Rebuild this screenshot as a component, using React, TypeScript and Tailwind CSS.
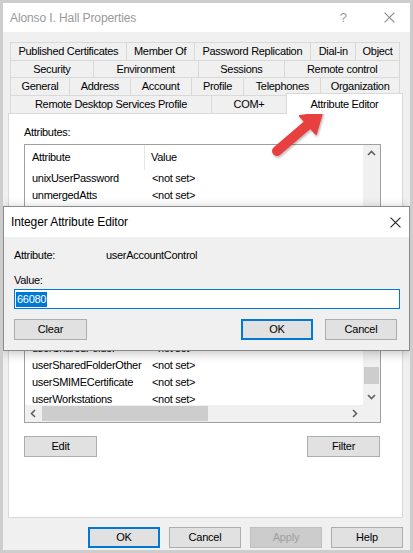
import React from 'react'

const tabRows: { label: string; w: number }[][] = [
  [
    { label: 'Published Certificates', w: 116 },
    { label: 'Member Of', w: 68 },
    { label: 'Password Replication', w: 117 },
    { label: 'Dial-in', w: 45 },
    { label: 'Object', w: 44 },
  ],
  [
    { label: 'Security', w: 83 },
    { label: 'Environment', w: 105 },
    { label: 'Sessions', w: 87 },
    { label: 'Remote control', w: 115 },
  ],
  [
    { label: 'General', w: 59 },
    { label: 'Address', w: 61 },
    { label: 'Account', w: 61 },
    { label: 'Profile', w: 53 },
    { label: 'Telephones', w: 77 },
    { label: 'Organization', w: 79 },
  ],
]

// rows 2..9 sit behind the dialog, so they get no text drawn
const attrs: [string, string, boolean][] = [
  ['unixUserPassword', '<not set>', true],
  ['unmergedAtts', '<not set>', true],
  ['unstructuredAddress', '<not set>', false],
  ['unstructuredName', '<not set>', false],
  ['url', '<not set>', false],
  ['userAccountControl', '0x10200', false],
  ['userCert', '<not set>', false],
  ['userCertificate', '<not set>', false],
  ['userParameters', '<not set>', false],
  ['userPassword', '<not set>', false],
  ['userSharedFolder', '<not set>', true],
  ['userSharedFolderOther', '<not set>', true],
  ['userSMIMECertificate', '<not set>', true],
  ['userWorkstations', '<not set>', true],
]

function Chevron({ dir }: { dir: 'up' | 'down' | 'left' | 'right' }) {
  const pts = {
    up: '1,6 4.5,2.5 8,6',
    down: '1,3 4.5,6.5 8,3',
    left: '6,1 2.5,4.5 6,8',
    right: '3,1 6.5,4.5 3,8',
  }[dir]
  return (
    <svg width="9" height="9" viewBox="0 0 9 9">
      <polyline points={pts} fill="none" stroke="#606060" strokeWidth="1.6" />
    </svg>
  )
}

function CloseX({ color, size }: { color: string; size: number }) {
  return (
    <svg width={size} height={size} viewBox="0 0 10 10">
      <path d="M0.5 0.5 L9.5 9.5 M9.5 0.5 L0.5 9.5" stroke={color} strokeWidth="1" />
    </svg>
  )
}

function Button({
  children,
  w,
  primary,
  disabled,
}: {
  children: React.ReactNode
  w: number
  primary?: boolean
  disabled?: boolean
}) {
  return (
    <div
      style={{ width: w }}
      className={
        'h-[21px] flex items-center justify-center text-[11px] tracking-[-0.2px] ' +
        (primary
          ? 'bg-[#e1e1e1] border-2 border-[#0078d7] text-black'
          : disabled
            ? 'bg-[#cccccc] border border-[#bfbfbf] text-[#a0a0a0]'
            : 'bg-[#e1e1e1] border border-[#adadad] text-black')
      }
    >
      {children}
    </div>
  )
}

export default function App() {
  return (
    <div className="relative w-[413px] h-[553px] overflow-hidden bg-[#f0f0f0] border-[3px] border-[#cdcdcd] font-['Liberation_Sans',Arial,sans-serif] text-black select-none">
      {/* Title bar */}
      <div className="h-[29px] bg-white flex items-center pl-[7px] pr-[15px]">
        <span className="text-[12px] text-[#999999] tracking-[-0.1px]">Alonso I. Hall Properties</span>
        <span className="ml-auto mr-[37px] text-[13px] text-[#9a9a9a]">?</span>
        <CloseX color="#8a8a8a" size={11} />
      </div>

      {/* Tabs */}
      <div className="mt-[10px] ml-[7px] flex flex-col text-[11px] tracking-[-0.3px]">
        {tabRows.map((row, i) => (
          <div key={i} className={'flex w-[390px] border-r border-[#d9d9d9] ' + (i === 1 ? 'h-[17px]' : 'h-[18px]')}>
            {row.map(t => (
              <div
                key={t.label}
                style={{ width: t.w }}
                className="border-l border-t border-[#d9d9d9] flex items-center justify-center whitespace-nowrap"
              >
                {t.label}
              </div>
            ))}
          </div>
        ))}
        <div className="flex h-[18px]">
          <div className="w-[201px] border-l border-t border-[#d9d9d9] flex items-center justify-center whitespace-nowrap">
            Remote Desktop Services Profile
          </div>
          <div className="w-[75px] border-l border-t border-[#d9d9d9] flex items-center justify-center">COM+</div>
          <div className="relative z-10 w-[117px] h-[21px] -mt-[2px] bg-white border-l border-t border-r border-[#d9d9d9] flex items-start pt-[2px] justify-center whitespace-nowrap">
            Attribute Editor
          </div>
        </div>
      </div>

      {/* Panel */}
      <div className="ml-[5px] w-[395px] h-[405px] bg-white border border-[#d9d9d9] pt-[11px] px-[15px] text-[11px] tracking-[-0.3px]">
        <div className="h-[14px] leading-[14px]">Attributes:</div>
        <div className="mt-[5px] w-[357px] h-[279px] border border-[#a0a0a0] flex flex-col">
          <div className="flex h-[260px]">
            <div className="flex-1 overflow-hidden">
              <div className="flex h-[25px] items-center">
                <div className="w-[120px] pl-[7px] h-full flex items-center border-r border-[#e5e5e5]">Attribute</div>
                <div className="pl-[6px]">Value</div>
              </div>
              {attrs.map(([name, val, shown]) => (
                <div key={name} className="flex h-[17px] items-center whitespace-nowrap">
                  {shown && (
                    <>
                      <div className="w-[120px] pl-[7px]">{name}</div>
                      <div className="pl-[7px]">{val}</div>
                    </>
                  )}
                </div>
              ))}
            </div>
            <div className="w-[17px] bg-[#f0f0f0] flex flex-col items-center">
              <div className="h-[17px] flex items-center justify-center">
                <Chevron dir="up" />
              </div>
              <div className="flex-1 w-full flex flex-col items-center">
                <div className="mt-[205px] w-[15px] h-[17px] bg-[#cdcdcd]" />
              </div>
              <div className="h-[17px] flex items-center justify-center">
                <Chevron dir="down" />
              </div>
            </div>
          </div>
          <div className="flex h-[17px]">
            <div className="flex-1 bg-[#f0f0f0] flex items-center">
              <div className="w-[17px] flex justify-center">
                <Chevron dir="left" />
              </div>
              <div className="w-[166px] h-[15px] bg-[#cdcdcd]" />
              <div className="ml-auto w-[17px] flex justify-center">
                <Chevron dir="right" />
              </div>
            </div>
            <div className="w-[17px] bg-[#f0f0f0]" />
          </div>
        </div>
        <div className="mt-[13px] w-[356px] flex justify-between">
          <Button w={73}>Edit</Button>
          <Button w={73}>Filter</Button>
        </div>
      </div>

      {/* Bottom buttons */}
      <div className="mt-[9px] pr-[7px] flex justify-end gap-[9px]">
        <Button w={72} primary>OK</Button>
        <Button w={72}>Cancel</Button>
        <Button w={72} disabled>Apply</Button>
        <Button w={72}>Help</Button>
      </div>

      {/* Integer Attribute Editor dialog */}
      <div className="absolute left-0 top-[203px] w-[407px] h-[145px] border border-[#8a8a8a] bg-[#f0f0f0] shadow-[0_2px_10px_rgba(0,0,0,0.25)] flex flex-col text-[11px] tracking-[-0.3px]">
        <div className="h-[30px] bg-white flex items-center pl-[7px] pr-[8px]">
          <span className="text-[12px] tracking-[-0.1px]">Integer Attribute Editor</span>
          <span className="ml-auto">
            <CloseX color="#222222" size={11} />
          </span>
        </div>
        <div className="pl-[10px] pr-[12px] pt-[11px] flex flex-col">
          <div className="flex h-[14px] items-center">
            <div className="w-[92px]">Attribute:</div>
            <div>userAccountControl</div>
          </div>
          <div className="mt-[11px] h-[14px] flex items-center">Value:</div>
          <div className="mt-[2px] w-[386px] h-[20px] bg-white border border-[#0078d7] flex items-center pl-[1px]">
            <span className="bg-[#0078d7] text-white h-[15px] leading-[15px] px-[1px]">66080</span>
          </div>
          <div className="mt-[10px] flex">
            <Button w={73}>Clear</Button>
            <div className="ml-auto flex gap-[12px]">
              <Button w={72} primary>OK</Button>
              <Button w={72}>Cancel</Button>
            </div>
          </div>
        </div>
      </div>

      {/* Red arrow */}
      <svg className="absolute left-0 top-0 pointer-events-none" width="413" height="553">
        <defs>
          <filter id="sh" x="-20%" y="-20%" width="140%" height="140%">
            <feDropShadow dx="1" dy="1.5" stdDeviation="1.2" floodColor="#000" floodOpacity="0.3" />
          </filter>
        </defs>
        <g filter="url(#sh)" transform="translate(-3 -3)">
          <line x1="277" y1="151" x2="308" y2="124.5" stroke="#e8403f" strokeWidth="10" strokeLinecap="round" />
          <polygon points="322,113 316,134 300,116" fill="#e8403f" strokeLinejoin="round" stroke="#e8403f" strokeWidth="2" />
        </g>
      </svg>
    </div>
  )
}
